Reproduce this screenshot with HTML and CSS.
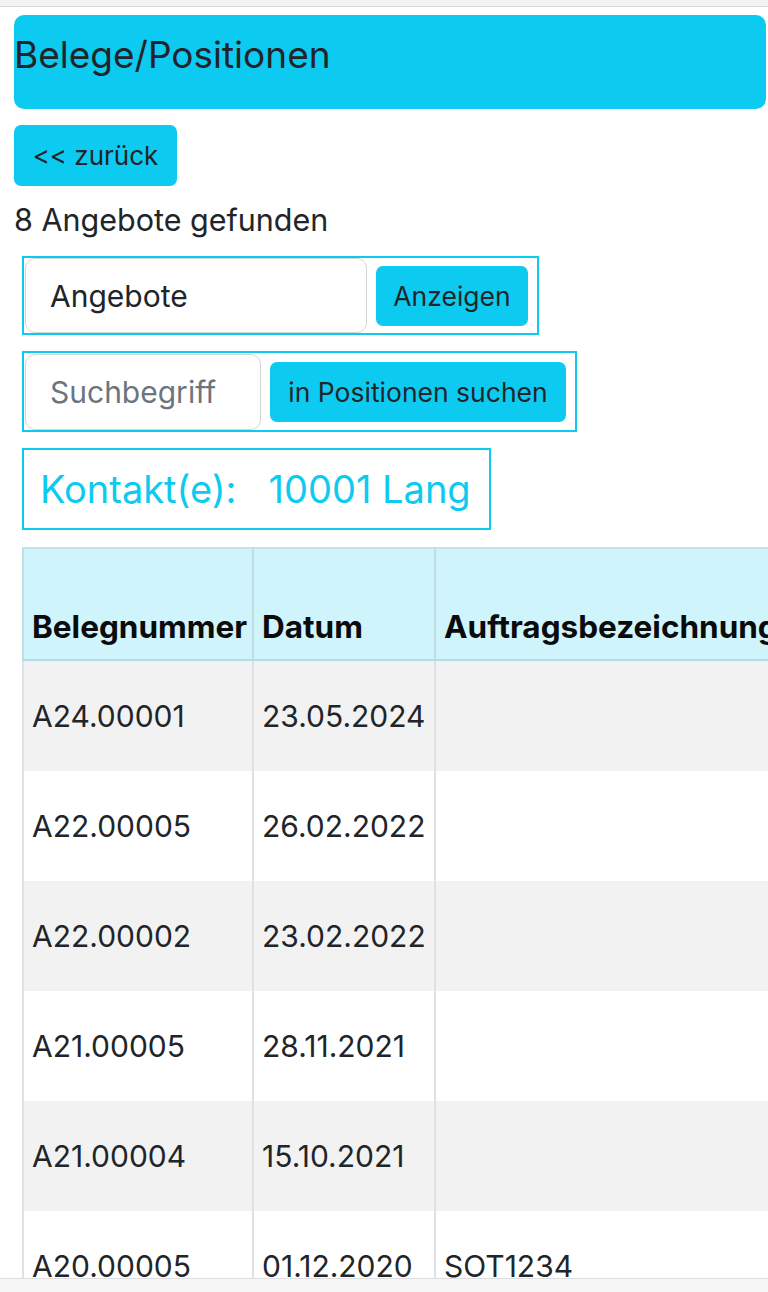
FILE: index.html
```html
<!DOCTYPE html>
<html lang="de">
<head>
<meta charset="utf-8">
<title>Belege/Positionen</title>
<link rel="stylesheet" href="styles.css">
</head>
<body>
<div class="topbar"></div>
<div class="page">
  <div class="header"><h1 class="title">Belege/Positionen</h1></div>
  <button class="btn btn-back">&lt;&lt; zurück</button>
  <p class="count">8 Angebote gefunden</p>
  <form class="box box-type">
    <input class="field field-type" type="text" value="Angebote">
    <button class="btn btn-small btn-show" type="button">Anzeigen</button>
  </form>
  <form class="box box-search">
    <input class="field field-search" type="text" placeholder="Suchbegriff">
    <button class="btn btn-small btn-search" type="button">in Positionen suchen</button>
  </form>
  <div class="box contact">Kontakt(e):&nbsp;&nbsp;&nbsp;10001 Lang</div>
  <div class="table-wrap">
    <table class="grid">
      <thead>
        <tr><th class="c1">Belegnummer</th><th class="c2">Datum</th><th class="c3">Auftragsbezeichnung</th></tr>
      </thead>
      <tbody>
        <tr><td>A24.00001</td><td>23.05.2024</td><td></td></tr>
        <tr><td>A22.00005</td><td>26.02.2022</td><td></td></tr>
        <tr><td>A22.00002</td><td>23.02.2022</td><td></td></tr>
        <tr><td>A21.00005</td><td>28.11.2021</td><td></td></tr>
        <tr><td>A21.00004</td><td>15.10.2021</td><td></td></tr>
        <tr><td>A20.00005</td><td>01.12.2020</td><td>SOT1234</td></tr>
      </tbody>
    </table>
  </div>
</div>
<div class="bottombar"></div>
</body>
</html>
```

FILE: styles.css
```css
html, body {
  margin: 0;
  padding: 0;
  background: #ffffff;
  overflow: hidden;
}
body {
  font-family: "Inter", "Noto Sans", sans-serif;
  color: #212529;
  width: 768px;
  height: 1292px;
}
.topbar {
  height: 6px;
  background: #f3f3f5;
  border-bottom: 1px solid #d6d6da;
}
.page {
  padding: 8px 0 0 14px;
}
.header {
  width: 752px;
  height: 94px;
  background: #0dcaf0;
  border-radius: 10px;
  box-sizing: border-box;
  padding-top: 18px;
}
.title {
  margin: 0;
  font-size: 37px;
  line-height: 43px;
  font-weight: 400;
  letter-spacing: 0;
  color: #212529;
}
.btn {
  font-family: inherit;
  color: #212529;
  background: #0dcaf0;
  border: 0;
  border-radius: 7px;
  margin: 0;
  padding: 0;
}
.btn-back {
  display: block;
  margin-top: 16px;
  width: 163px;
  height: 61px;
  font-size: 26px;
  letter-spacing: 0;
}
.count {
  margin: 16px 0 18px 0;
  font-size: 30.5px;
  line-height: 36px;
  letter-spacing: 0;
}
.box {
  margin-left: 8px;
  border: 2px solid #0dcaf0;
  box-sizing: border-box;
  display: flex;
  align-items: center;
}
.box-type {
  width: 517px;
  height: 79px;
  padding: 0 9px 0 1px;
  gap: 9px;
}
.box-search {
  margin-top: 16px;
  width: 555px;
  height: 81px;
  padding: 0 9px 0 1px;
  gap: 9px;
}
.field {
  font-family: inherit;
  font-size: 30px;
  color: #212529;
  border: 1.5px solid #d3d5d8;
  border-radius: 10px;
  box-sizing: border-box;
  padding: 0 0 0 24px;
  margin: 0;
  letter-spacing: 0;
  background: #fff;
}
.field::placeholder {
  color: #6c757d;
}
.field-type {
  width: 342px;
  height: 75px;
}
.field-search {
  width: 236px;
  height: 76px;
}
.btn-small {
  height: 60px;
  font-size: 26.5px;
  letter-spacing: 0;
}
.btn-show {
  width: 153px;
}
.btn-search {
  width: 297px;
}
.contact {
  margin-top: 16px;
  width: 469px;
  height: 82px;
  padding-left: 16px;
  color: #0dcaf0;
  font-size: 38px;
  letter-spacing: 0;
}
.table-wrap {
  margin: 17px 0 0 8px;
  overflow: hidden;
  width: 746px;
}
.grid {
  border-collapse: collapse;
  table-layout: fixed;
  width: 900px;
  font-size: 30px;
  letter-spacing: 0;
}
.c1 { width: 230px; }
.c2 { width: 182px; }
.c3 { width: 488px; }
.grid th, .grid td {
  padding: 0 0 0 8px;
  text-align: left;
  border-left: 2px solid #dee2e6;
  border-right: 2px solid #dee2e6;
  white-space: nowrap;
  overflow: hidden;
}
.grid th {
  background: #cff4fc;
  height: 112px;
  vertical-align: bottom;
  padding-bottom: 13px;
  font-weight: 700;
  font-size: 31.5px;
  letter-spacing: 0;
  color: #0b0b0b;
  border-top: 2px solid #c5e4ea;
  border-bottom: 2px solid #b8dbe3;
  border-left-color: #c0dde4;
  border-right-color: #c0dde4;
  box-sizing: border-box;
}
.grid td {
  height: 110px;
  vertical-align: middle;
}
.grid tbody tr:nth-child(odd) td {
  background: #f2f2f2;
}
.bottombar {
  position: fixed;
  left: 0;
  right: 0;
  bottom: 0;
  height: 13px;
  background: #f6f6f7;
  border-top: 1px solid #dedee0;
}
```
